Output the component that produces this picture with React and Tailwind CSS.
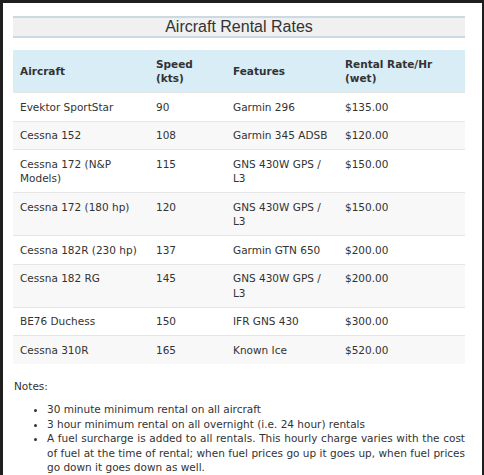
import React from 'react';

const rates = [
    { aircraft: 'Evektor SportStar', speed: '90', features: 'Garmin 296', rate: '$135.00' },
    { aircraft: 'Cessna 152', speed: '108', features: 'Garmin 345 ADSB', rate: '$120.00' },
    { aircraft: 'Cessna 172 (N&P Models)', speed: '115', features: 'GNS 430W GPS / L3', rate: '$150.00' },
    { aircraft: 'Cessna 172 (180 hp)', speed: '120', features: 'GNS 430W GPS / L3', rate: '$150.00' },
    { aircraft: 'Cessna 182R (230 hp)', speed: '137', features: 'Garmin GTN 650', rate: '$200.00' },
    { aircraft: 'Cessna 182 RG', speed: '145', features: 'GNS 430W GPS / L3', rate: '$200.00' },
    { aircraft: 'BE76 Duchess', speed: '150', features: 'IFR GNS 430', rate: '$300.00' },
    { aircraft: 'Cessna 310R', speed: '165', features: 'Known Ice', rate: '$520.00' },
];

const notes = [
    '30 minute minimum rental on all aircraft',
    '3 hour minimum rental on all overnight (i.e. 24 hour) rentals',
    'A fuel surcharge is added to all rentals. This hourly charge varies with the cost of fuel at the time of rental; when fuel prices go up it goes up, when fuel prices go down it goes down as well.',
];

function App() {
    return (
        <div className="min-h-[475px] bg-[#1f1f1f] pt-[3px] pl-[3px] pr-[2px]">
            <div className="min-h-[472px] bg-white pl-[10px] pr-[17px] pt-[13px] text-[#333] font-['DejaVu_Sans',Verdana,sans-serif] text-[10.5px] leading-[14.5px]">
                {/* title bar */}
                <div className="border-y-2 border-[#cbd9e3] bg-[#f0f0f0] h-[22px] flex items-center justify-center">
                    <h1 className="font-['Liberation_Sans',Arial,sans-serif] text-[16px] leading-[18px] text-[#333]">
                        Aircraft Rental Rates
                    </h1>
                </div>

                <table className="mt-[12px] w-full table-fixed border-collapse text-left">
                    <colgroup>
                        <col className="w-[136px]" />
                        <col className="w-[77px]" />
                        <col className="w-[112px]" />
                        <col />
                    </colgroup>
                    <thead>
                        <tr className="bg-[#d9edf7]">
                            <th className="px-[7px] py-[6.5px] font-bold align-middle">Aircraft</th>
                            <th className="px-[7px] py-[6.5px] font-bold align-middle">Speed (kts)</th>
                            <th className="px-[7px] py-[6.5px] font-bold align-middle">Features</th>
                            <th className="px-[7px] py-[6.5px] font-bold align-middle">Rental Rate/Hr (wet)</th>
                        </tr>
                    </thead>
                    <tbody>
                        {rates.map((r, i) => (
                            <tr key={r.aircraft} className={`border-t border-[#e6e6e6] ${i % 2 === 1 ? 'bg-[#f8f8f8]' : 'bg-white'}`}>
                                <td className="px-[7px] py-[6.5px] align-top">{r.aircraft}</td>
                                <td className="px-[7px] py-[6.5px] align-top">{r.speed}</td>
                                <td className="px-[7px] py-[6.5px] align-top">{r.features}</td>
                                <td className="px-[7px] py-[6.5px] align-top">{r.rate}</td>
                            </tr>
                        ))}
                    </tbody>
                </table>

                <p className="mt-[15px] pl-[1px]">Notes:</p>
                <ul className="mt-[9px] list-disc pl-[34px] text-justify">
                    {notes.map((n) => (
                        <li key={n}>{n}</li>
                    ))}
                </ul>
            </div>
        </div>
    );
}

export default App;
